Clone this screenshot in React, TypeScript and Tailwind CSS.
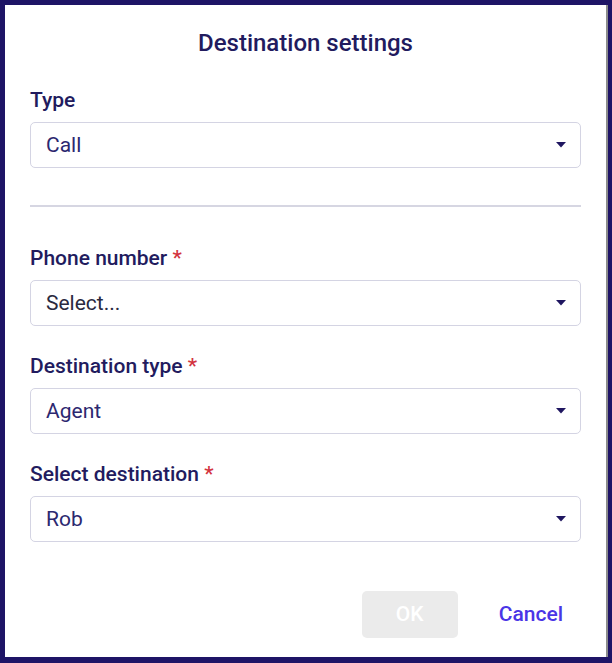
import React from "react";

function Caret() {
  return (
    <svg width="10" height="6" viewBox="0 0 10 6" className="shrink-0">
      <path d="M0 0 L10 0 L5 5.5 Z" fill="#1f1660" />
    </svg>
  );
}

function SelectBox({ value, dark }: { value: string; dark?: boolean }) {
  return (
    <div className="flex h-[46px] items-center justify-between rounded-[5px] border border-[#d4d4e3] bg-white pl-[15px] pr-[14px]">
      <span className={`text-[21px] leading-6 ${dark ? "text-[#2a2940]" : "text-[#2c2870]"}`}>{value}</span>
      <Caret />
    </div>
  );
}

function Field({ label, required, value, dark }: { label: string; required?: boolean; value: string; dark?: boolean }) {
  return (
    <div className="flex flex-col gap-[10px]">
      <div className="text-[21px] font-medium leading-6 text-[#221b5e]">
        {label}
        {required && <span className="text-[#d3343f]"> *</span>}
      </div>
      <SelectBox value={value} dark={dark} />
    </div>
  );
}

export default function App() {
  return (
    <div
      className="h-[663px] w-[612px] bg-[#1e1466] pb-[6px] pl-[5px] pr-[4px] pt-[5px]"
      style={{ fontFamily: "Roboto, 'Liberation Sans', sans-serif" }}
    >
      <div className="flex h-full flex-col border-r-2 border-[#8c8c8c] bg-white px-[25px] pt-[24px]">
        <h1 className="text-center text-[24px] font-medium leading-7 text-[#221b5e]">Destination settings</h1>
        <div className="mt-[31px]">
          <Field label="Type" value="Call" />
        </div>
        <div className="mt-[37px] h-[2px] bg-[#d6d6e2]" />
        <div className="mt-[39px] flex flex-col gap-[28px]">
          <Field label="Phone number" required value="Select..." dark />
          <Field label="Destination type" required value="Agent" />
          <Field label="Select destination" required value="Rob" />
        </div>
        <div className="mt-[49px] flex items-center justify-end gap-[23px]">
          <button className="h-[47px] w-[96px] rounded-[5px] bg-[#ebebeb] text-[21px] font-medium text-white">OK</button>
          <button className="h-[47px] px-[18px] text-[21px] font-medium text-[#4a35e6]">Cancel</button>
        </div>
      </div>
    </div>
  );
}
